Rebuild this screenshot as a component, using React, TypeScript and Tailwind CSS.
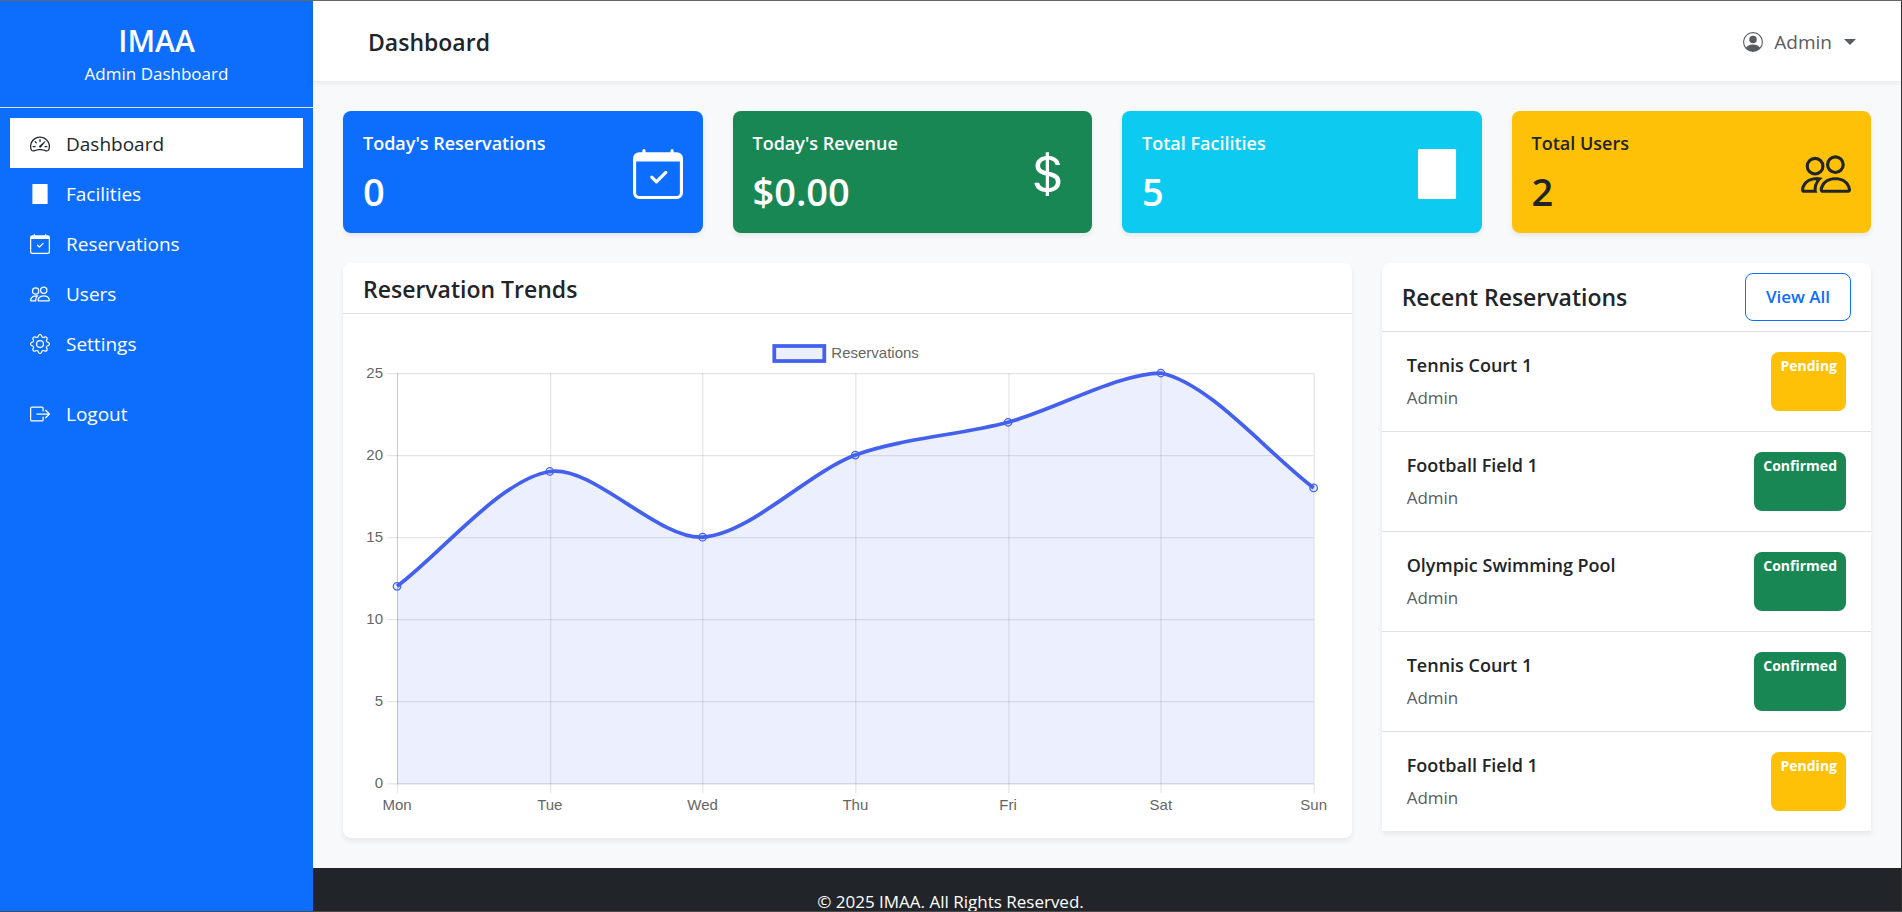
import type { ReactNode } from "react";
import {
  BsSpeedometer2,
  BsCalendarCheck,
  BsPeople,
  BsGear,
  BsBoxArrowRight,
  BsPersonCircle,
  BsCurrencyDollar,
} from "react-icons/bs";

function Building({ className }: { className?: string }) {
  return (
    <svg viewBox="0 0 16 16" fill="currentColor" className={className} width="1em" height="1em" aria-hidden="true">
      <rect x="1.9" y="0" width="12.2" height="16" rx="0.5" />
    </svg>
  );
}

function NavItem({ icon, label, active }: { icon: ReactNode; label: string; active?: boolean }) {
  return (
    <li>
      <a
        href="#"
        className={
          active
            ? "flex h-[50px] items-center gap-4 bg-white px-5 pt-0.5 text-[19px] text-[#212529]"
            : "flex h-[50px] items-center gap-4 px-5 pt-0.5 text-[19px] text-white"
        }
      >
        <span className="text-[20px]">{icon}</span>
        {label}
      </a>
    </li>
  );
}

const stats = [
  { label: "Today's Reservations", value: "0", icon: <BsCalendarCheck />, tone: "bg-[#0d6efd] text-white" },
  { label: "Today's Revenue", value: "$0.00", icon: <BsCurrencyDollar />, tone: "bg-[#198754] text-white" },
  { label: "Total Facilities", value: "5", icon: <Building />, tone: "bg-[#0dcaf0] text-white" },
  { label: "Total Users", value: "2", icon: <BsPeople />, tone: "bg-[#ffc107] text-[#212529]" },
];

const reservations = [
  { place: "Tennis Court 1", user: "Admin", status: "Pending" },
  { place: "Football Field 1", user: "Admin", status: "Confirmed" },
  { place: "Olympic Swimming Pool", user: "Admin", status: "Confirmed" },
  { place: "Tennis Court 1", user: "Admin", status: "Confirmed" },
  { place: "Football Field 1", user: "Admin", status: "Pending" },
];

const days = ["Mon", "Tue", "Wed", "Thu", "Fri", "Sat", "Sun"];
const values = [12, 19, 15, 20, 22, 25, 18];

const LEFT = 34;
const RIGHT = 950;
const TOP = 39;
const BOTTOM = 449;

/* Cubic spline whose control points are scaled by neighbour distance and kept inside the plot. */
function curve(points: { x: number; y: number }[], tension: number) {
  const clamp = (v: number) => Math.min(BOTTOM, Math.max(TOP, v));
  const handles = points.map((p, i) => {
    const prev = points[Math.max(0, i - 1)];
    const next = points[Math.min(points.length - 1, i + 1)];
    const before = Math.hypot(p.x - prev.x, p.y - prev.y);
    const after = Math.hypot(next.x - p.x, next.y - p.y);
    const a = (tension * before) / (before + after);
    const b = (tension * after) / (before + after);
    return {
      inX: p.x - a * (next.x - prev.x),
      inY: clamp(p.y - a * (next.y - prev.y)),
      outX: p.x + b * (next.x - prev.x),
      outY: clamp(p.y + b * (next.y - prev.y)),
    };
  });
  return points
    .map((p, i) =>
      i === 0
        ? `M${p.x} ${p.y}`
        : `C${handles[i - 1].outX} ${handles[i - 1].outY} ${handles[i].inX} ${handles[i].inY} ${p.x} ${p.y}`,
    )
    .join(" ");
}

function TrendChart() {
  const x = (i: number) => LEFT + ((RIGHT - LEFT) * i) / 6;
  const y = (v: number) => BOTTOM - ((BOTTOM - TOP) * v) / 25;
  const points = values.map((v, i) => ({ x: x(i), y: y(v) }));
  const line = curve(points, 0.3);
  return (
    <svg
      viewBox="0 0 968 484"
      className="block w-full font-['Liberation_Sans',sans-serif] text-[15px]"
      role="img"
      aria-label="Reservations per day"
    >
      {[0, 5, 10, 15, 20, 25].map((v) => (
        <g key={v}>
          <path d={`M${LEFT - 10} ${Math.round(y(v)) + 0.5}H${RIGHT}`} stroke="rgba(0,0,0,0.1)" strokeWidth="1.25" />
          <text x={LEFT - 14} y={y(v) + 5} textAnchor="end" fill="#666">
            {v}
          </text>
        </g>
      ))}
      {days.map((d, i) => (
        <g key={d}>
          <path
            d={`M${Math.round(x(i)) + 0.5} ${TOP}V${BOTTOM + 10}`}
            stroke="rgba(0,0,0,0.1)"
            strokeWidth="1.25"
          />
          <text x={x(i)} y={BOTTOM + 27} textAnchor="middle" fill="#666">
            {d}
          </text>
        </g>
      ))}
      <path d={`M${LEFT + 0.5} ${TOP}V${BOTTOM + 0.5}H${RIGHT}`} fill="none" stroke="rgba(0,0,0,0.1)" />
      <path d={`${line} L${RIGHT} ${BOTTOM} L${LEFT} ${BOTTOM} Z`} fill="rgba(67,97,238,0.1)" />
      <path d={line} fill="none" stroke="#4361ee" strokeWidth="3.75" />
      {points.map((p) => (
        <circle key={p.x} cx={p.x} cy={p.y} r="3.75" fill="rgba(67,97,238,0.1)" stroke="#4361ee" strokeWidth="1.25" />
      ))}
      <rect x="411" y="12" width="50" height="15" fill="rgba(67,97,238,0.1)" stroke="#4361ee" strokeWidth="3.75" />
      <text x="468" y="24" fill="#666">
        Reservations
      </text>
    </svg>
  );
}

export default function App() {
  return (
    <div className="flex h-screen overflow-hidden border-t border-r border-b border-t-[#666] border-r-[#333] border-b-[#4a4a4a] bg-[#f8f9fa] font-['Open_Sans','Noto_Sans',sans-serif] text-[#212529]">
      <aside className="flex w-[313px] shrink-0 flex-col bg-[#0d6efd] text-white">
        <div className="h-[107px] border-b border-[#dee2e6] pt-5 text-center">
          <div className="text-[30px] leading-[40px] font-semibold">IMAA</div>
          <div className="text-[17px] leading-[26px]">Admin Dashboard</div>
        </div>
        <nav className="p-[10px]">
          <ul>
            <NavItem icon={<BsSpeedometer2 />} label="Dashboard" active />
            <NavItem icon={<Building />} label="Facilities" />
            <NavItem icon={<BsCalendarCheck />} label="Reservations" />
            <NavItem icon={<BsPeople />} label="Users" />
            <NavItem icon={<BsGear />} label="Settings" />
          </ul>
          <ul className="mt-5">
            <NavItem icon={<BsBoxArrowRight />} label="Logout" />
          </ul>
        </nav>
      </aside>

      <div className="min-w-0 flex-1">
        <header className="flex h-20 items-center justify-between bg-white pt-0.5 pr-[45px] pl-[55px] shadow-[0_2px_5px_rgba(0,0,0,0.075)]">
          <h1 className="text-[23px] font-semibold">Dashboard</h1>
          <button type="button" className="flex items-center text-[19px] text-[#595c5f]">
            <BsPersonCircle className="mr-[11px] text-[20px]" />
            Admin
            <span className="ml-3 border-x-[6px] border-t-[6px] border-x-transparent border-t-[#595c5f]" />
          </button>
        </header>

        <main className="p-[30px]">
          <section className="grid grid-cols-4 gap-[30px]">
            {stats.map((s) => (
              <div
                key={s.label}
                className={`flex h-[122px] items-center justify-between rounded-lg px-5 pt-[22px] pb-[18px] shadow-[0_3px_5px_rgba(0,0,0,0.075)] ${s.tone}`}
              >
                <div>
                  <h2 className="text-[18px] leading-5 font-semibold">{s.label}</h2>
                  <p className="mt-[14px] text-[38px] leading-[48px] font-semibold">{s.value}</p>
                </div>
                <span className="text-[50px]">{s.icon}</span>
              </div>
            ))}
          </section>

          <section className="mt-[30px] grid grid-cols-3 items-start gap-[30px]">
            <div className="col-span-2 rounded-lg bg-white shadow-[0_3px_5px_rgba(0,0,0,0.075)]">
              <h2 className="flex h-[51px] items-center border-b border-[#dfdfdf] px-5 pt-0.5 text-[23px] font-semibold">
                Reservation Trends
              </h2>
              <div className="p-5">
                <TrendChart />
              </div>
            </div>

            <div className="rounded-t-lg bg-white shadow-[0_3px_5px_rgba(0,0,0,0.075)]">
              <div className="flex h-[69px] items-center justify-between border-b border-[#dfdfdf] px-5">
                <h2 className="text-[23px] font-semibold">Recent Reservations</h2>
                <a
                  href="#"
                  className="flex h-12 items-center rounded-lg border border-[#0d6efd] px-5 text-[17px] font-semibold text-[#0d6efd]"
                >
                  View All
                </a>
              </div>
              <ul className="divide-y divide-[#dee2e6]">
                {reservations.map((r, i) => (
                  <li key={i} className="flex h-[100px] justify-between px-[25px] py-5 last:h-[99px]">
                    <div>
                      <h3 className="text-[18px] leading-[27px] font-semibold">{r.place}</h3>
                      <p className="mt-[5px] text-[17px] leading-[27px] text-[#595c5f]">{r.user}</p>
                    </div>
                    <span
                      className={
                        r.status === "Pending"
                          ? "rounded-lg bg-[#ffc107] px-[9px] pt-[5px] text-[14px] leading-[18px] font-bold text-white"
                          : "rounded-lg bg-[#198754] px-[9px] pt-[5px] text-[14px] leading-[18px] font-bold text-white"
                      }
                    >
                      {r.status}
                    </span>
                  </li>
                ))}
              </ul>
            </div>
          </section>
        </main>

        <footer className="bg-[#212529] py-5 pr-[313px] text-center text-[17px] leading-[28px] text-white">
          © 2025 IMAA. All Rights Reserved.
        </footer>
      </div>
    </div>
  );
}
